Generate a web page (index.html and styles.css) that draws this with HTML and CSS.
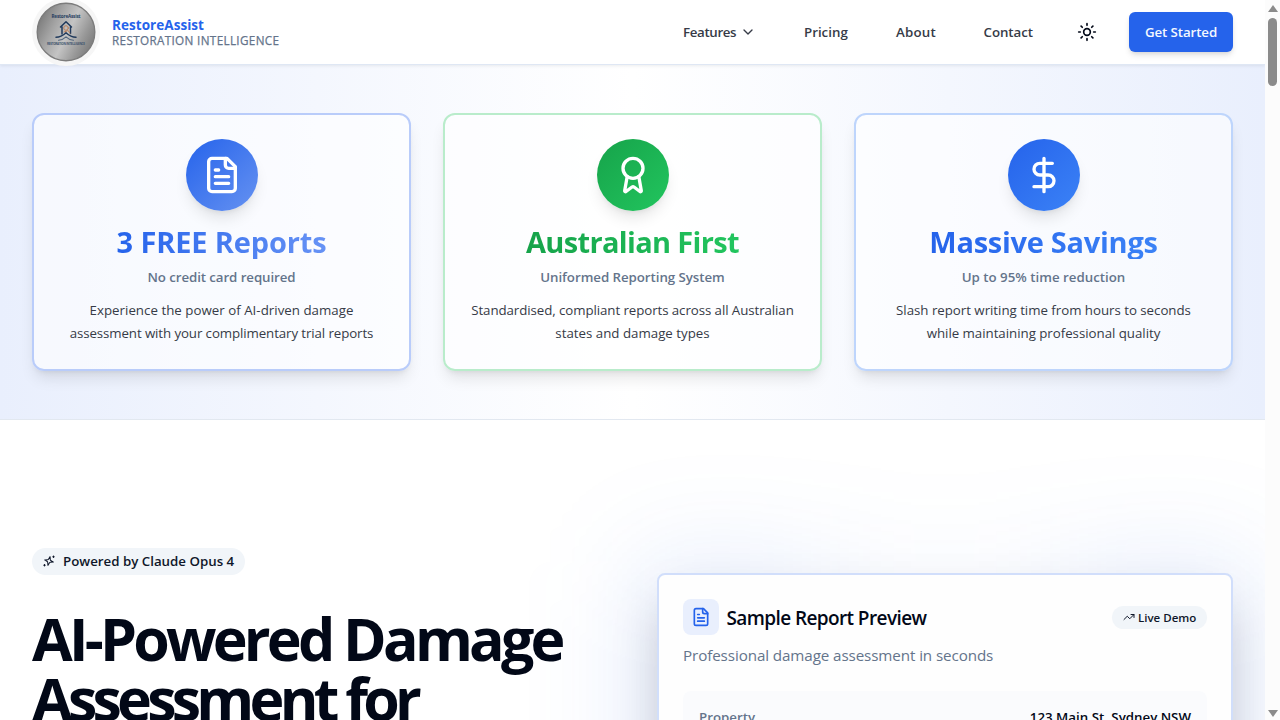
FILE: index.html
```
<!DOCTYPE html>
<html lang="en">
<head>
<meta charset="utf-8">
<title>RestoreAssist</title>
<link rel="stylesheet" href="styles.css">
</head>
<body>
<div class="viewport">
<div class="page">
  <header class="nav">
    <div class="brand">
      <div class="logo">
        <svg width="60" height="60" viewBox="0 0 60 60">
          <defs>
            <linearGradient id="metal" x1="0" y1="0.25" x2="1" y2="0.75">
              <stop offset="0" stop-color="#777"/><stop offset=".28" stop-color="#a3a3a3"/><stop offset=".53" stop-color="#c4c4c4"/><stop offset=".78" stop-color="#989898"/><stop offset="1" stop-color="#777"/>
            </linearGradient>
          </defs>
          <circle cx="30" cy="30" r="28.8" fill="url(#metal)" stroke="#7c7c7c" stroke-width="1.4"/>
          <text class="logo-name" x="30" y="16.3" text-anchor="middle" textLength="29">RestoreAssist</text>
          <g fill="none" stroke="#213a5c" stroke-width="1.5">
            <path d="M24.5 25 30 19.7l5.500 5.300M26 24.500v7.500M34.500 24.500v7"/>
            <path d="M20 35.200c5 0 7.500-2.200 10-4.500 2.500 2.300 5 4.500 10 4.500"/>
            <path d="M22.500 38.300c3.500-.2 5.500-1.600 7.500-3.500 2 1.900 4 3.300 7.500 3.500" stroke="#53677f" stroke-width="1.100"/>
          </g>
          <g fill="none" stroke="#b97f5b" stroke-width="1"><circle cx="30" cy="26" r="2.300"/><path d="m31.500 28 2.500 3M28 30l3-1"/></g>
          <text class="logo-tag" x="30" y="43.300" text-anchor="middle" textLength="38">RESTORATION INTELLIGENCE</text>
        </svg>
      </div>
      <div class="brand-text">
        <span class="brand-name">RestoreAssist</span>
        <span class="brand-tag">RESTORATION INTELLIGENCE</span>
      </div>
    </div>
    <nav class="links">
      <a class="link features">Features
        <svg class="chev" width="16" height="16" viewBox="0 0 24 24"><path d="m6 9 6 6 6-6"/></svg></a>
      <a class="link pricing">Pricing</a>
      <a class="link about">About</a>
      <a class="link contact">Contact</a>
      <svg class="sun" width="20" height="20" viewBox="0 0 24 24"><circle cx="12" cy="12" r="4"/><path d="M12 2v2M12 20v2M4.930 4.930l1.410 1.410M17.660 17.660l1.410 1.410M2 12h2M20 12h2M6.340 17.660l-1.410 1.410M19.070 4.930l-1.410 1.410"/></svg>
      <a class="cta">Get Started</a>
    </nav>
  </header>

  <section class="band">
    <article class="feature indigo">
      <div class="disc"><svg width="40" height="40" viewBox="0 0 24 24"><path d="M15 2H6a2 2 0 0 0-2 2v16a2 2 0 0 0 2 2h12a2 2 0 0 0 2-2V7Z"/><path d="M14 2v4a2 2 0 0 0 2 2h4M10 9H8M16 13H8M16 17H8"/></svg></div>
      <h3 class="t1">3 FREE Reports</h3>
      <p class="sub s1">No credit card required</p>
      <p class="desc"><span class="d1">Experience the power of AI-driven damage</span><span class="d2">assessment with your complimentary trial reports</span></p>
    </article>
    <article class="feature green">
      <div class="disc"><svg width="40" height="40" viewBox="0 0 24 24"><path d="m15.477 12.890 1.515 8.526a.5.5 0 0 1-.81.470l-3.580-2.687a1 1 0 0 0-1.197 0l-3.586 2.686a.5.5 0 0 1-.81-.469l1.514-8.526"/><circle cx="12" cy="8" r="6"/></svg></div>
      <h3 class="t2">Australian First</h3>
      <p class="sub s2">Uniformed Reporting System</p>
      <p class="desc"><span class="d3">Standardised, compliant reports across all Australian</span><span>states and damage types</span></p>
    </article>
    <article class="feature blue">
      <div class="disc"><svg width="40" height="40" viewBox="0 0 24 24"><path d="M12 2v20M17 5H9.500a3.500 3.500 0 0 0 0 7h5a3.500 3.500 0 0 1 0 7H6"/></svg></div>
      <h3 class="t3">Massive Savings</h3>
      <p class="sub">Up to 95% time reduction</p>
      <p class="desc"><span class="d4">Slash report writing time from hours to seconds</span><span class="d4">while maintaining professional quality</span></p>
    </article>
  </section>

  <section class="hero">
    <div class="intro">
      <div class="pill"><svg width="12" height="12" viewBox="0 0 24 24"><path d="m12 3-1.900 5.800a2 2 0 0 1-1.300 1.300L3 12l5.800 1.900a2 2 0 0 1 1.300 1.300L12 21l1.900-5.800a2 2 0 0 1 1.300-1.300L21 12l-5.800-1.900a2 2 0 0 1-1.300-1.300Z" transform="rotate(14 12 12)"/><path d="M21 2v3M22.500 3.500h-3M3 19v3M4.500 20.500h-3"/></svg>Powered by Claude Opus 4</div>
      <h1><span class="h-a">AI-Powered Damage</span><span class="h-b">Assessment for</span></h1>
    </div>
    <div class="preview-wrap">
      <div class="glow"></div>
      <div class="preview">
        <div class="preview-head">
          <div class="tile"><svg width="20" height="20" viewBox="0 0 24 24"><path d="M15 2H6a2 2 0 0 0-2 2v16a2 2 0 0 0 2 2h12a2 2 0 0 0 2-2V7Z"/><path d="M14 2v4a2 2 0 0 0 2 2h4M10 9H8M16 13H8M16 17H8"/></svg></div>
          <h2>Sample Report Preview</h2>
          <div class="live"><svg width="12" height="12" viewBox="0 0 24 24"><path d="m22 7-8.500 8.500-5-5L2 17"/><path d="M16 7h6v6"/></svg>Live Demo</div>
        </div>
        <p class="lead">Professional damage assessment in seconds</p>
        <div class="row"><span class="key">Property</span><span class="val">123 Main St, Sydney NSW</span></div>
      </div>
    </div>
  </section>
</div>
<div class="scroll"><i class="up"></i><i class="thumb"></i><i class="down"></i></div>
</div>
</body>
</html>
```
FILE: styles.css
```
* { box-sizing: border-box; margin: 0; padding: 0; }
body { font-family: "Open Sans", "Noto Sans", sans-serif; font-size: 13.3px; color: #020817; background: #fff; overflow: hidden; }
svg { fill: none; stroke: currentColor; stroke-width: 2; stroke-linecap: round; stroke-linejoin: round; flex: none; }
.viewport { display: grid; grid-template-columns: 1265px 15px; height: 720px; }
.page { display: flex; flex-direction: column; height: 720px; overflow: hidden; }

.nav { flex: none; height: 65px; display: flex; justify-content: space-between; padding: 0 32px; border-bottom: 1px solid #dfe7f4; box-shadow: 0 1px 3px rgba(15,23,42,.08); position: relative; z-index: 2; background: #fff; }
.brand { display: flex; gap: 12px; height: 63px; align-items: center; }
.logo { width: 68px; height: 68px; border-radius: 50%; background: #f6f6f6; display: grid; place-items: center; flex: none; }
.logo svg { stroke: none; }
.logo-name { font-size: 4.6px; font-weight: 700; fill: #26405f; }
.logo-tag { font-size: 3px; font-weight: 700; fill: #40546d; }
.brand-text { display: flex; flex-direction: column; white-space: nowrap; padding-top: 1px; }
.brand-name { font-size: 13.5px; font-weight: 700; line-height: 16px; color: #2563eb; letter-spacing: .05px; }
.brand-tag { font-size: 11.7px; font-weight: 500; line-height: 15px; color: #64748b; letter-spacing: .35px; -webkit-text-stroke: .25px #64748b; }
.links { display: flex; align-items: center; height: 64px; white-space: nowrap; }
.link { font-weight: 600; color: #363b47; display: flex; align-items: center; line-height: 20px; }
.features { width: 121px; letter-spacing: -.35px; gap: 4px; }
.pricing { width: 92px; }
.about { width: 87.5px; letter-spacing: .2px; }
.contact { width: 93px; letter-spacing: -.05px; }
.sun { margin-right: 32.5px; }
.cta { width: 104px; height: 40px; border-radius: 6px; background: #2563eb; color: #f3f8ff; font-weight: 600; line-height: 40px; text-align: center; letter-spacing: -.1px; box-shadow: 0 4px 6px -1px rgba(0,0,0,.12), 0 2px 4px -2px rgba(0,0,0,.1); }

.band { flex: none; height: 355px; padding: 48px 32px; display: grid; grid-template-columns: repeat(3, 1fr); gap: 32px; background: linear-gradient(90deg, #e9effd, #fff 50%, #e9effd); border-bottom: 1px solid #e2e8f0; }
.feature { height: 258px; border: 2px solid #b9ccfa; border-radius: 12px; background: rgba(255,255,255,.6); background-clip: padding-box; padding: 24px 0; display: flex; flex-direction: column; align-items: center; white-space: nowrap; box-shadow: 0 10px 15px -3px rgba(0,0,0,.1), 0 4px 6px -4px rgba(0,0,0,.1); }
.disc { width: 72px; height: 72px; border-radius: 50%; display: grid; place-items: center; color: #fff; box-shadow: 0 10px 15px -3px rgba(0,0,0,.1), 0 4px 6px -4px rgba(0,0,0,.1); }
.indigo .disc { background: linear-gradient(135deg, #2563eb, #6692f1); }
.green .disc { background: linear-gradient(135deg, #16a34a, #22c55e); }
.blue .disc { background: linear-gradient(135deg, #2563eb, #3b82f6); }
.green { border-color: #b9eccb; }
.blue { border-color: #bed5fc; }
.feature h3 { margin-top: 16px; height: 32px; line-height: 30px; font-size: 29px; font-weight: 700; color: transparent; }
.indigo h3 { background: linear-gradient(90deg, #2563eb, #6692f5) text; }
.green h3 { background: linear-gradient(90deg, #16a34a, #22c55e) text; }
.blue h3 { background: linear-gradient(90deg, #2563eb, #3b82f6) text; }
.t1 { letter-spacing: -.15px; }
.t2 { letter-spacing: -.65px; }
.t3 { letter-spacing: -.27px; }
.sub { margin-top: 8px; font-weight: 600; line-height: 20px; color: #64748b; }
.s1 { letter-spacing: -.09px; }
.s2 { letter-spacing: -.05px; }
.desc { margin-top: 12px; line-height: 22.750px; color: #363b47; display: flex; flex-direction: column; align-items: center; }
.d1 { letter-spacing: .02px; }
.d2 { letter-spacing: -.1px; }
.d3 { letter-spacing: -.080px; }
.d4 { letter-spacing: -.030px; }

.hero { flex: 1; display: grid; grid-template-columns: 577px 576px; gap: 48px; padding: 0 32px; white-space: nowrap; overflow: hidden; align-items: start; }
.intro { padding-top: 128px; }
.pill { display: inline-flex; align-items: center; height: 27px; width: 213px; padding: 0 0 1px 11px; gap: 8px; border-radius: 14px; background: #f1f5f9; color: #0f172a; font-weight: 600; }
.intro h1 { margin-top: 33px; font-size: 59px; font-weight: 700; line-height: 60px; display: flex; flex-direction: column; }
.h-a { letter-spacing: -3.760px; }
.h-b { letter-spacing: -4.750px; }
.preview-wrap { position: relative; margin-top: 153px; }
.glow { position: absolute; left: -16px; right: -16px; top: -12px; height: 640px; border-radius: 24px; background: linear-gradient(90deg, rgba(37,99,235,.15), rgba(37,99,235,.02) 50%, rgba(37,99,235,.15)); filter: blur(56px); }
.preview { position: relative; height: 590px; border: 2px solid #d1defb; border-radius: 8px; background: #fefefe; padding: 24px; box-shadow: 0 25px 50px -12px rgba(0,0,0,.25); }
.preview-head { display: flex; align-items: center; height: 36px; }
.tile { width: 36px; height: 36px; border-radius: 8px; background: #e9effd; color: #2563eb; display: grid; place-items: center; }
.preview h2 { margin-left: 7.5px; padding-top: 2px; font-size: 19px; font-weight: 600; line-height: 28px; letter-spacing: -.6px; }
.live { margin-left: auto; display: flex; align-items: center; gap: 3px; width: 95.500px; height: 23px; padding-left: 11.500px; border-radius: 12px; background: #f1f5f9; color: #0f172a; font-size: 11.500px; font-weight: 600; }
.lead { margin-top: 8px; font-size: 15.200px; line-height: 24px; color: #64748b; letter-spacing: -.1px; }
.row { margin-top: 24px; height: 52px; padding: 0 16px; border-radius: 8px; background: #fafbfd; display: flex; justify-content: space-between; align-items: center; font-weight: 600; }
.key { color: #64748b; }

.scroll { background: #fcfcfc; display: flex; flex-direction: column; align-items: center; padding: 5px 0 3px; }
.scroll i { display: block; flex: none; }
.up { border: 5px solid transparent; border-top: 0; border-bottom: 7px solid #8b8b8b; }
.thumb { width: 9px; height: 68px; margin-top: 6px; border-radius: 5px; background: #8b8b8b; }
.down { margin-top: auto; border: 5px solid transparent; border-bottom: 0; border-top: 7px solid #8b8b8b; }
```
